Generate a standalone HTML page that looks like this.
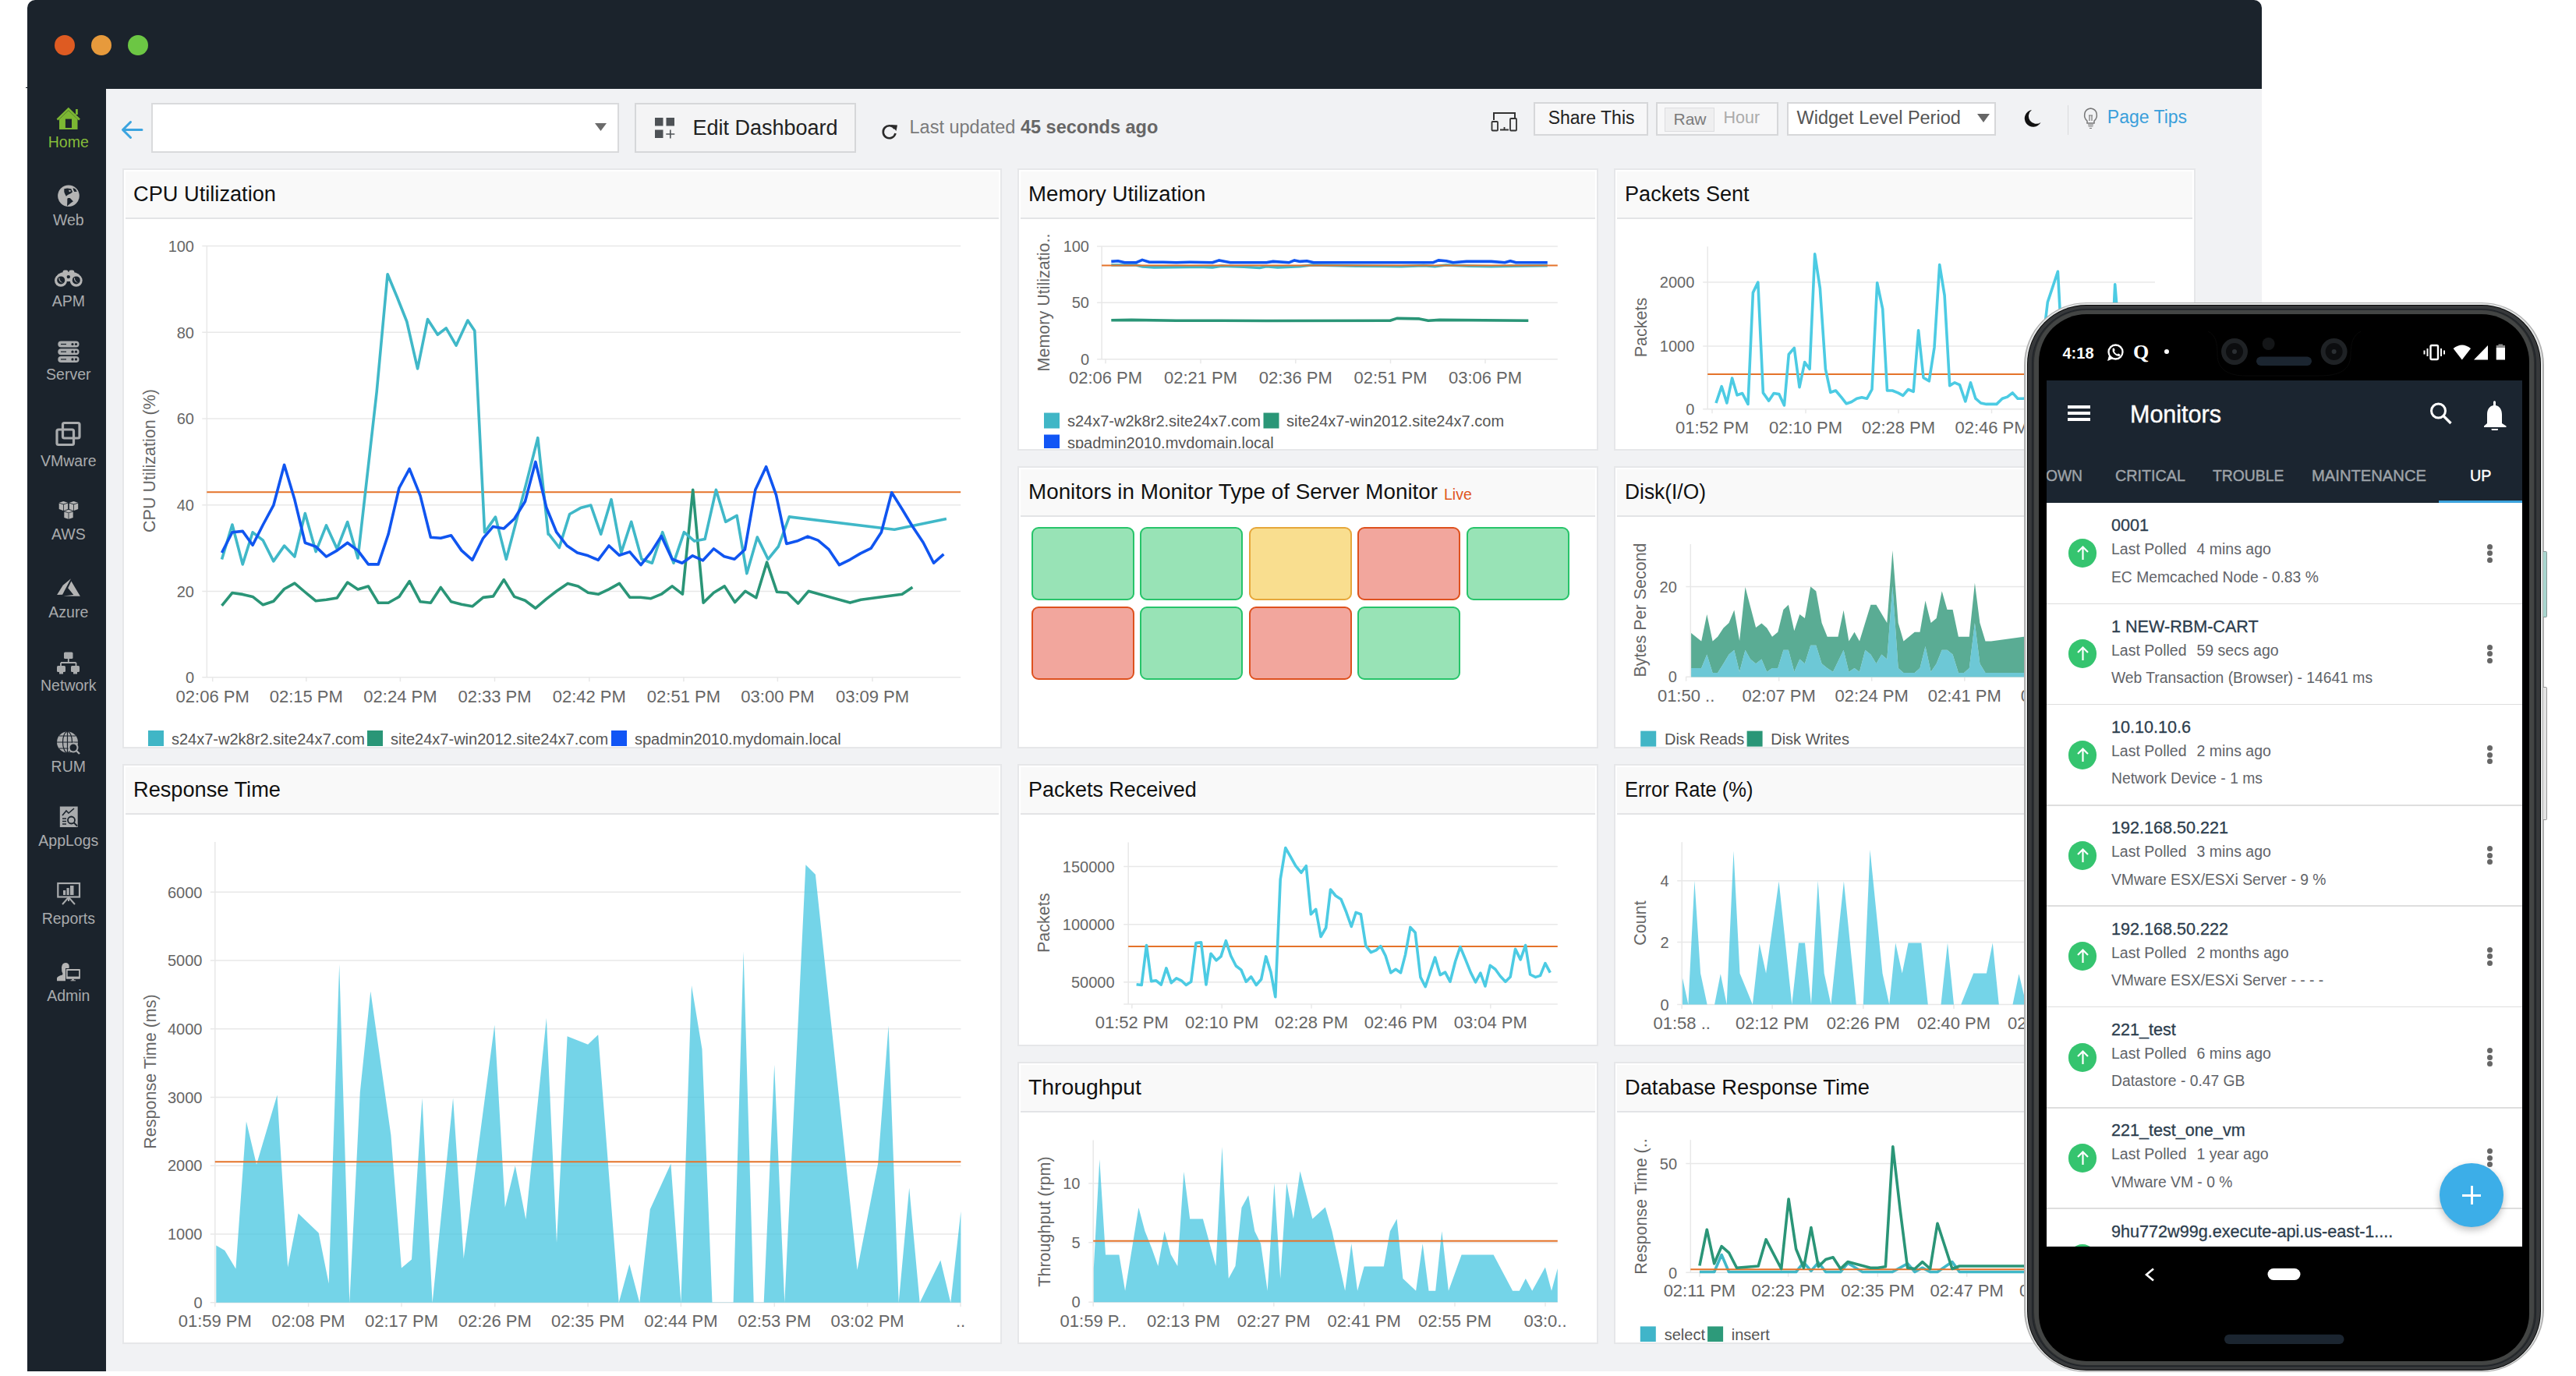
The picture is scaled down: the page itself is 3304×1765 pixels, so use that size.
<!DOCTYPE html>
<html><head><meta charset="utf-8"><title>Site24x7 Dashboard</title>
<style>
html,body{margin:0;padding:0;}
body{width:3304px;height:1765px;position:relative;overflow:hidden;background:#fff;font-family:"Liberation Sans", sans-serif;}
.w{position:absolute;background:#fff;border:2px solid #e6e7e9;box-sizing:border-box;}
.wh{position:absolute;left:2px;top:2px;right:2px;height:59px;background:#f9f9f9;border-bottom:2px solid #e3e4e6;}
</style></head><body>
<div style="position:absolute;left:35px;top:0px;width:2866px;height:1759px;background:#1b232c;border-radius:10px 10px 0 0;"></div>
<div style="position:absolute;left:70px;top:44.5px;width:26px;height:26.0px;background:#de5b22;border-radius:50%;"></div>
<div style="position:absolute;left:117px;top:44.5px;width:26px;height:26.0px;background:#e79a3c;border-radius:50%;"></div>
<div style="position:absolute;left:164px;top:44.5px;width:26px;height:26.0px;background:#6cc644;border-radius:50%;"></div>
<div style="position:absolute;left:136px;top:114px;width:2765px;height:1645px;background:#f1f2f4;"></div>
<div style="position:absolute;left:33px;top:111.5px;width:3px;height:1.2999999999999972px;background:#0f151c;"></div>
<div style="position:absolute;top:173.49px;font-size:19.5px;line-height:19.5px;color:#86bd3a;white-space:nowrap;left:87.80px;transform:translateX(-50%);">Home</div>
<div style="position:absolute;top:272.99px;font-size:19.5px;line-height:19.5px;color:#a9abad;white-space:nowrap;left:87.80px;transform:translateX(-50%);">Web</div>
<div style="position:absolute;top:377.29px;font-size:19.5px;line-height:19.5px;color:#a9abad;white-space:nowrap;left:87.80px;transform:translateX(-50%);">APM</div>
<div style="position:absolute;top:471.49px;font-size:19.5px;line-height:19.5px;color:#a9abad;white-space:nowrap;left:87.80px;transform:translateX(-50%);">Server</div>
<div style="position:absolute;top:581.69px;font-size:19.5px;line-height:19.5px;color:#a9abad;white-space:nowrap;left:87.80px;transform:translateX(-50%);">VMware</div>
<div style="position:absolute;top:676.19px;font-size:19.5px;line-height:19.5px;color:#a9abad;white-space:nowrap;left:87.80px;transform:translateX(-50%);">AWS</div>
<div style="position:absolute;top:776.19px;font-size:19.5px;line-height:19.5px;color:#a9abad;white-space:nowrap;left:87.80px;transform:translateX(-50%);">Azure</div>
<div style="position:absolute;top:869.69px;font-size:19.5px;line-height:19.5px;color:#a9abad;white-space:nowrap;left:87.80px;transform:translateX(-50%);">Network</div>
<div style="position:absolute;top:974.49px;font-size:19.5px;line-height:19.5px;color:#a9abad;white-space:nowrap;left:87.80px;transform:translateX(-50%);">RUM</div>
<div style="position:absolute;top:1068.99px;font-size:19.5px;line-height:19.5px;color:#a9abad;white-space:nowrap;left:87.80px;transform:translateX(-50%);">AppLogs</div>
<div style="position:absolute;top:1168.99px;font-size:19.5px;line-height:19.5px;color:#a9abad;white-space:nowrap;left:87.80px;transform:translateX(-50%);">Reports</div>
<div style="position:absolute;top:1267.89px;font-size:19.5px;line-height:19.5px;color:#a9abad;white-space:nowrap;left:87.80px;transform:translateX(-50%);">Admin</div>
<svg style="position:absolute;left:0;top:0" width="140" height="1300"><path d="M73.5 153.5 L87.8 139.5 L102 153.5" fill="none" stroke="#7cb733" stroke-width="2.6"/><rect x="97" y="140" width="2.8" height="7" fill="#7cb733"/><path d="M76 153 L87.8 141.8 L99.5 153 L99.5 166 L76 166 Z" fill="#7cb733"/><rect x="83.9" y="152.6" width="8.1" height="11.4" fill="#1b232c"/><circle cx="87.95" cy="251.2" r="13.8" fill="#b4b4b4"/><path d="M82.3 242.2 L86.3 241.6 L91.3 242.2 L93 246.3 L91 248 L86.9 250 L84.9 251.8 L83.4 248.9 L82.3 246.3 Z" fill="#1b232c"/><path d="M88.4 243.5 L91 244.6 L90 246.2 L88.3 245.4 Z" fill="#b4b4b4"/><path d="M93.6 241 L96.8 242.5 L98.8 245.7 L95.4 246 L94.2 243.7 Z" fill="#1b232c"/><path d="M86.9 254.1 L89.8 254.1 L93.9 258.2 L90.7 260.5 L86 264.6 L86.3 259 L86.3 255.6 Z" fill="#1b232c"/><circle cx="78" cy="359.8" r="8" fill="#b4b4b4"/><circle cx="97.7" cy="359.8" r="8" fill="#b4b4b4"/><path d="M71.5 356 Q74 350 82 349 L93.5 349 Q101.5 350 104.2 356 L104 361 L71.5 361 Z" fill="#b4b4b4"/><rect x="80.5" y="346.6" width="7" height="6" rx="2.5" fill="#b4b4b4"/><rect x="88.3" y="346.6" width="7" height="6" rx="2.5" fill="#b4b4b4"/><rect x="86.5" y="361" width="2.6" height="2.5" fill="#1b232c"/><circle cx="78.2" cy="359.4" r="5" fill="#1b232c"/><circle cx="97.8" cy="359.4" r="5" fill="#1b232c"/><circle cx="87.8" cy="355.1" r="2.2" fill="#1b232c"/><path d="M75.3 356.5 Q75.2 362.5 81.5 362.8 Q76.5 361.5 76.3 356.5 Z" fill="#b4b4b4"/><path d="M94.9 356.5 Q94.8 362.5 101.1 362.8 Q96.1 361.5 95.9 356.5 Z" fill="#b4b4b4"/><rect x="74.3" y="437.5" width="27.2" height="8" rx="4" fill="#a9abad"/><circle cx="93" cy="441.5" r="1.6" fill="#1b232c"/><circle cx="97.5" cy="441.5" r="1.6" fill="#1b232c"/><rect x="78" y="440.9" width="7" height="1.2" fill="#1b232c"/><rect x="74.3" y="447.2" width="27.2" height="8" rx="4" fill="#a9abad"/><circle cx="93" cy="451.2" r="1.6" fill="#1b232c"/><circle cx="97.5" cy="451.2" r="1.6" fill="#1b232c"/><rect x="78" y="450.59999999999997" width="7" height="1.2" fill="#1b232c"/><rect x="74.3" y="456.9" width="27.2" height="8" rx="4" fill="#a9abad"/><circle cx="93" cy="460.9" r="1.6" fill="#1b232c"/><circle cx="97.5" cy="460.9" r="1.6" fill="#1b232c"/><rect x="78" y="460.29999999999995" width="7" height="1.2" fill="#1b232c"/><rect x="80.5" y="542.5" width="21.5" height="19.5" rx="2" fill="none" stroke="#a9abad" stroke-width="3.2"/><rect x="73" y="551" width="21.5" height="19.5" rx="2" fill="none" stroke="#a9abad" stroke-width="3.2"/><path d="M75.9 644.6999999999999 L81.4 642.9 L86.9 644.6999999999999 L81.4 646.5 Z" fill="#b4b4b4"/><path d="M75.7 645.6 L81.0 647.1999999999999 L81.0 654.9 L75.7 653.1 Z" fill="#b4b4b4"/><path d="M81.80000000000001 647.1999999999999 L87.10000000000001 645.6 L87.10000000000001 653.1 L81.80000000000001 654.9 Z" fill="#b4b4b4"/><path d="M89.0 644.6999999999999 L94.5 642.9 L100.0 644.6999999999999 L94.5 646.5 Z" fill="#b4b4b4"/><path d="M88.8 645.6 L94.1 647.1999999999999 L94.1 654.9 L88.8 653.1 Z" fill="#b4b4b4"/><path d="M94.9 647.1999999999999 L100.2 645.6 L100.2 653.1 L94.9 654.9 Z" fill="#b4b4b4"/><path d="M82.5 655.5999999999999 L88 653.8 L93.5 655.5999999999999 L88 657.4 Z" fill="#b4b4b4"/><path d="M82.3 656.5 L87.6 658.0999999999999 L87.6 665.8 L82.3 664.0 Z" fill="#b4b4b4"/><path d="M88.4 658.0999999999999 L93.7 656.5 L93.7 664.0 L88.4 665.8 Z" fill="#b4b4b4"/><path d="M73.1 763 L80.7 750.7 L90.9 742.2 L80.1 762.7 Z" fill="#b4b4b4"/><path d="M91.4 745.4 L102.9 764.8 L81.4 764.5 L94.3 763 L87.2 754.3 Z" fill="#b4b4b4"/><rect x="82" y="836.4" width="11.5" height="8.5" rx="1.5" fill="#a9abad"/><path d="M87.8 845 V850 M78 850 H97.5 M78 850 V854 M97.5 850 V854" stroke="#a9abad" stroke-width="1.8" fill="none"/><rect x="73" y="854" width="11" height="8" rx="1.5" fill="#a9abad"/><rect x="91" y="854" width="11" height="8" rx="1.5" fill="#a9abad"/><rect x="76" y="862" width="5" height="2.5" fill="#a9abad"/><rect x="94" y="862" width="5" height="2.5" fill="#a9abad"/><circle cx="86.5" cy="952" r="13.5" fill="#a9abad"/><path d="M73 952 H100 M86.5 938.5 V965.5 M76 944 H97 M76 960 H97" stroke="#1b232c" stroke-width="1.2" fill="none"/><ellipse cx="86.5" cy="952" rx="6" ry="13.5" fill="none" stroke="#1b232c" stroke-width="1.2"/><circle cx="94" cy="959" r="5.5" fill="#1b232c" stroke="#a9abad" stroke-width="2"/><path d="M97.5 962.5 L102 967" stroke="#a9abad" stroke-width="2.4"/><path d="M76.8 1034.5 H99.7 V1061 H76.8 Z" fill="#a9abad"/><path d="M80 1046 L85 1040 L88 1043 L95 1037" stroke="#1b232c" stroke-width="1.6" fill="none"/><path d="M80 1050 H85 M80 1053.5 H85 M80 1057 H85" stroke="#1b232c" stroke-width="1.3"/><circle cx="91.5" cy="1052" r="4.5" fill="none" stroke="#1b232c" stroke-width="1.8"/><path d="M94.5 1055 L99 1059.5" stroke="#1b232c" stroke-width="2"/><rect x="74.3" y="1133" width="27.7" height="17.5" fill="none" stroke="#a9abad" stroke-width="2.2"/><rect x="81" y="1142" width="3.2" height="6" fill="#a9abad"/><rect x="85.5" y="1139" width="3.2" height="9" fill="#a9abad"/><rect x="90" y="1136" width="4.5" height="12" fill="#a9abad"/><path d="M88 1151 L80 1160 M88 1151 L96 1160 M88 1151 V1156" stroke="#a9abad" stroke-width="2"/><path d="M73 1258.2 L73 1254.5 Q74 1252 80 1250.5 L80.5 1249 Q78.8 1246 79 1241 Q79.5 1235 84 1235 Q88.5 1235.2 88.8 1239.5 L88.5 1242 L84 1242 L84 1258.2 Z" fill="#b4b4b4"/><rect x="84.8" y="1242.9" width="18.1" height="12.8" rx="0.8" fill="#b4b4b4"/><rect x="86.7" y="1245" width="14.4" height="7.6" fill="#1b232c"/><rect x="92.2" y="1255.7" width="2.6" height="1.8" fill="#b4b4b4"/><rect x="90.6" y="1257.3" width="6.3" height="1" fill="#b4b4b4"/></svg>
<svg style="position:absolute;left:150px;top:150px" width="40" height="34"><path d="M8 16.5 H32 M17.5 6.5 L7.5 16.5 L17.5 26.5" fill="none" stroke="#3ba4df" stroke-width="3" stroke-linecap="round" stroke-linejoin="round"/></svg>
<div style="position:absolute;left:194px;top:132px;width:600px;height:64px;background:#fff;border:2px solid #d9dadc;box-sizing:border-box;"></div>
<svg style="position:absolute;left:760px;top:155px" width="22" height="16"><path d="M3 3 H18 L10.5 13 Z" fill="#6b6b6b"/></svg>
<div style="position:absolute;left:814px;top:132px;width:284px;height:64px;background:#f4f4f5;border:2px solid #d6d7d9;box-sizing:border-box;"></div>
<svg style="position:absolute;left:838px;top:150px" width="32" height="30"><rect x="2" y="1" width="10.5" height="10.5" fill="#4e5256"/><rect x="16.5" y="1" width="10.5" height="10.5" fill="#4e5256"/><rect x="2" y="16.5" width="10.5" height="10.5" fill="#4e5256"/><path d="M21.8 16.5 V27.5 M16.3 22 H27.3" stroke="#4e5256" stroke-width="1.6"/></svg>
<div style="position:absolute;top:150.84px;font-size:27px;line-height:27px;color:#222;white-space:nowrap;left:888.50px;">Edit Dashboard</div>
<svg style="position:absolute;left:1128px;top:155px" width="28" height="26"><path d="M19.5 10 A8 8 0 1 0 20.5 16" fill="none" stroke="#2b2b2b" stroke-width="2.6"/><path d="M14.5 5 L23 5.5 L21.5 13 Z" fill="#2b2b2b"/></svg>
<div style="position:absolute;top:152.10px;font-size:23.5px;line-height:23.5px;color:#7a7a7a;white-space:nowrap;left:1166.50px;">Last updated <b style="color:#666">45 seconds ago</b></div>
<svg style="position:absolute;left:1910px;top:140px" width="40" height="32"><path d="M6 14 V5 H33 V13" fill="none" stroke="#333" stroke-width="2"/><rect x="3.5" y="16" width="7.5" height="11.5" rx="1" fill="#f1f2f4" stroke="#333" stroke-width="1.8"/><rect x="27" y="12" width="8" height="15.5" rx="1" fill="#f1f2f4" stroke="#333" stroke-width="1.8"/><path d="M14 26.5 H25 M19.5 23 V26.5" stroke="#333" stroke-width="1.8"/></svg>
<div style="position:absolute;left:1967px;top:131px;width:147px;height:43px;background:#f7f7f8;border:2px solid #d6d7d9;box-sizing:border-box;"></div>
<div style="position:absolute;top:140.03px;font-size:23px;line-height:23px;color:#222;white-space:nowrap;left:1985.70px;">Share This</div>
<div style="position:absolute;left:2124px;top:131px;width:157px;height:43px;background:#f7f7f8;border:2px solid #d6d7d9;box-sizing:border-box;"></div>
<div style="position:absolute;left:2134.5px;top:137.5px;width:64.5px;height:31.5px;background:#efeff0;border:1.5px solid #dcdddf;box-sizing:border-box;"></div>
<div style="position:absolute;top:141.72px;font-size:21px;line-height:21px;color:#7b7b7b;white-space:nowrap;left:2146.50px;">Raw</div>
<div style="position:absolute;top:141.30px;font-size:21.5px;line-height:21.5px;color:#ababab;white-space:nowrap;left:2210.60px;">Hour</div>
<div style="position:absolute;left:2292px;top:131px;width:268px;height:43px;background:#fff;border:2px solid #d6d7d9;box-sizing:border-box;"></div>
<div style="position:absolute;top:140.10px;font-size:23.5px;line-height:23.5px;color:#555;white-space:nowrap;left:2304.50px;">Widget Level Period</div>
<svg style="position:absolute;left:2533px;top:143px" width="22" height="16"><path d="M3 3 H19 L11 14 Z" fill="#666"/></svg>
<svg style="position:absolute;left:2590px;top:137px" width="32" height="30"><path d="M16 4 A11 11 0 1 0 27.5 20 A9 9 0 0 1 16 4 Z" fill="#111"/></svg>
<div style="position:absolute;left:2651.5px;top:134.5px;width:1.5px;height:38.5px;background:#d9dadc;"></div>
<svg style="position:absolute;left:2668px;top:134px" width="28" height="34"><path d="M9 21 C4 17 4 6 13.5 5 C23 6 23 17 18 21 V24 H9 Z" fill="none" stroke="#777" stroke-width="1.5"/><path d="M10 26 H17 M10.5 28 H16.5 M12 30.5 H15 M12 21 V14 M15 21 V14 M11 14 H16" stroke="#777" stroke-width="1.2" fill="none"/></svg>
<div style="position:absolute;top:138.83px;font-size:23px;line-height:23px;color:#3a9fdb;white-space:nowrap;left:2702.80px;">Page Tips</div>
<div class="w" style="left:157px;top:216px;width:1128px;height:744px;"><div class="wh"></div></div>
<div style="position:absolute;top:236.34px;font-size:27px;line-height:27px;color:#111;white-space:nowrap;transform:scaleX(1.0080);transform-origin:0 0;left:171.00px;">CPU Utilization</div>
<div class="w" style="left:1305px;top:216px;width:745px;height:362px;"><div class="wh"></div></div>
<div style="position:absolute;top:236.34px;font-size:27px;line-height:27px;color:#111;white-space:nowrap;transform:scaleX(1.0236);transform-origin:0 0;left:1319.00px;">Memory Utilization</div>
<div class="w" style="left:2070px;top:216px;width:746px;height:362px;"><div class="wh"></div></div>
<div style="position:absolute;top:236.34px;font-size:27px;line-height:27px;color:#111;white-space:nowrap;transform:scaleX(1.0035);transform-origin:0 0;left:2084.00px;">Packets Sent</div>
<div class="w" style="left:1305px;top:598px;width:745px;height:362px;"><div class="wh"></div></div>
<div style="position:absolute;top:618.34px;font-size:27px;line-height:27px;color:#111;white-space:nowrap;transform:scaleX(1.0301);transform-origin:0 0;left:1319.00px;">Monitors in Monitor Type of Server Monitor</div>
<div class="w" style="left:2070px;top:598px;width:746px;height:362px;"><div class="wh"></div></div>
<div style="position:absolute;top:618.34px;font-size:27px;line-height:27px;color:#111;white-space:nowrap;transform:scaleX(0.9763);transform-origin:0 0;left:2084.00px;">Disk(I/O)</div>
<div class="w" style="left:157px;top:980px;width:1128px;height:744px;"><div class="wh"></div></div>
<div style="position:absolute;top:1000.34px;font-size:27px;line-height:27px;color:#111;white-space:nowrap;transform:scaleX(1.0071);transform-origin:0 0;left:171.00px;">Response Time</div>
<div class="w" style="left:1305px;top:980px;width:745px;height:362px;"><div class="wh"></div></div>
<div style="position:absolute;top:1000.34px;font-size:27px;line-height:27px;color:#111;white-space:nowrap;transform:scaleX(0.9981);transform-origin:0 0;left:1319.00px;">Packets Received</div>
<div class="w" style="left:1305px;top:1362px;width:745px;height:362px;"><div class="wh"></div></div>
<div style="position:absolute;top:1382.34px;font-size:27px;line-height:27px;color:#111;white-space:nowrap;transform:scaleX(1.0488);transform-origin:0 0;left:1319.00px;">Throughput</div>
<div class="w" style="left:2070px;top:980px;width:746px;height:362px;"><div class="wh"></div></div>
<div style="position:absolute;top:1000.34px;font-size:27px;line-height:27px;color:#111;white-space:nowrap;transform:scaleX(0.9452);transform-origin:0 0;left:2084.00px;">Error Rate (%)</div>
<div class="w" style="left:2070px;top:1362px;width:746px;height:362px;"><div class="wh"></div></div>
<div style="position:absolute;top:1382.34px;font-size:27px;line-height:27px;color:#111;white-space:nowrap;transform:scaleX(1.0102);transform-origin:0 0;left:2084.00px;">Database Response Time</div>
<div style="position:absolute;top:625.29px;font-size:19.5px;line-height:19.5px;color:#e0561c;white-space:nowrap;left:1852.00px;">Live</div>
<div style="position:absolute;left:1323px;top:676px;width:131.5px;height:94px;background:#98e3b6;border:2px solid #27c46a;border-radius:9px;box-sizing:border-box;"></div>
<div style="position:absolute;left:1462px;top:676px;width:131.5px;height:94px;background:#98e3b6;border:2px solid #27c46a;border-radius:9px;box-sizing:border-box;"></div>
<div style="position:absolute;left:1602px;top:676px;width:131.5px;height:94px;background:#f9de8f;border:2px solid #e6a73a;border-radius:9px;box-sizing:border-box;"></div>
<div style="position:absolute;left:1741px;top:676px;width:131.5px;height:94px;background:#f2a69d;border:2px solid #de511e;border-radius:9px;box-sizing:border-box;"></div>
<div style="position:absolute;left:1881px;top:676px;width:131.5px;height:94px;background:#98e3b6;border:2px solid #27c46a;border-radius:9px;box-sizing:border-box;"></div>
<div style="position:absolute;left:1323px;top:778px;width:131.5px;height:94px;background:#f2a69d;border:2px solid #de511e;border-radius:9px;box-sizing:border-box;"></div>
<div style="position:absolute;left:1462px;top:778px;width:131.5px;height:94px;background:#98e3b6;border:2px solid #27c46a;border-radius:9px;box-sizing:border-box;"></div>
<div style="position:absolute;left:1602px;top:778px;width:131.5px;height:94px;background:#f2a69d;border:2px solid #de511e;border-radius:9px;box-sizing:border-box;"></div>
<div style="position:absolute;left:1741px;top:778px;width:131.5px;height:94px;background:#98e3b6;border:2px solid #27c46a;border-radius:9px;box-sizing:border-box;"></div>
<svg style="position:absolute;left:0;top:0" width="3304" height="1765" font-family="Liberation Sans, sans-serif"><line x1="259.3" y1="315.6" x2="1232.2" y2="315.6" stroke="#e8e8e8" stroke-width="1.5"/><line x1="259.3" y1="426.3" x2="1232.2" y2="426.3" stroke="#e8e8e8" stroke-width="1.5"/><line x1="259.3" y1="537.0" x2="1232.2" y2="537.0" stroke="#e8e8e8" stroke-width="1.5"/><line x1="259.3" y1="647.8" x2="1232.2" y2="647.8" stroke="#e8e8e8" stroke-width="1.5"/><line x1="259.3" y1="758.4" x2="1232.2" y2="758.4" stroke="#e8e8e8" stroke-width="1.5"/><line x1="259.3" y1="868.8" x2="1232.2" y2="868.8" stroke="#e8e8e8" stroke-width="1.5"/><line x1="265.3" y1="315" x2="265.3" y2="868.8" stroke="#e8e8e8" stroke-width="1.5"/><line x1="272.7" y1="868.8" x2="272.7" y2="874.3" stroke="#e8e8e8" stroke-width="1.5"/><line x1="392.8" y1="868.8" x2="392.8" y2="874.3" stroke="#e8e8e8" stroke-width="1.5"/><line x1="513.4" y1="868.8" x2="513.4" y2="874.3" stroke="#e8e8e8" stroke-width="1.5"/><line x1="634.5" y1="868.8" x2="634.5" y2="874.3" stroke="#e8e8e8" stroke-width="1.5"/><line x1="755.8" y1="868.8" x2="755.8" y2="874.3" stroke="#e8e8e8" stroke-width="1.5"/><line x1="876.9" y1="868.8" x2="876.9" y2="874.3" stroke="#e8e8e8" stroke-width="1.5"/><line x1="997.4" y1="868.8" x2="997.4" y2="874.3" stroke="#e8e8e8" stroke-width="1.5"/><line x1="1119.0" y1="868.8" x2="1119.0" y2="874.3" stroke="#e8e8e8" stroke-width="1.5"/><text x="249.0" y="322.8" font-size="20" fill="#666666" text-anchor="end">100</text><text x="249.0" y="433.5" font-size="20" fill="#666666" text-anchor="end">80</text><text x="249.0" y="544.2" font-size="20" fill="#666666" text-anchor="end">60</text><text x="249.0" y="655.0" font-size="20" fill="#666666" text-anchor="end">40</text><text x="249.0" y="765.6" font-size="20" fill="#666666" text-anchor="end">20</text><text x="249.0" y="876.0" font-size="20" fill="#666666" text-anchor="end">0</text><text x="272.7" y="900.5" font-size="22" fill="#666666" text-anchor="middle">02:06 PM</text><text x="392.8" y="900.5" font-size="22" fill="#666666" text-anchor="middle">02:15 PM</text><text x="513.4" y="900.5" font-size="22" fill="#666666" text-anchor="middle">02:24 PM</text><text x="634.5" y="900.5" font-size="22" fill="#666666" text-anchor="middle">02:33 PM</text><text x="755.8" y="900.5" font-size="22" fill="#666666" text-anchor="middle">02:42 PM</text><text x="876.9" y="900.5" font-size="22" fill="#666666" text-anchor="middle">02:51 PM</text><text x="997.4" y="900.5" font-size="22" fill="#666666" text-anchor="middle">03:00 PM</text><text x="1119.0" y="900.5" font-size="22" fill="#666666" text-anchor="middle">03:09 PM</text><text x="0" y="0" font-size="21.5" fill="#666666" text-anchor="middle" transform="translate(199,591) rotate(-90)">CPU Utilization (%)</text><line x1="265.3" y1="631.2" x2="1232.2" y2="631.2" stroke="#e4732a" stroke-width="2"/><polyline points="284.5,776.8 297.9,760.5 311.2,762.4 324.1,765.4 337.4,775.8 350.8,771.3 364.6,755.5 377.9,748.1 391.3,759.5 405.1,770.8 418.5,769.3 432.3,766.9 445.7,747.1 459.0,756.0 472.4,752.0 485.2,773.3 498.1,773.3 511.9,765.4 525.2,745.6 539.1,771.8 552.4,773.3 565.3,753.5 578.6,771.8 592.0,775.3 605.8,777.8 619.7,766.4 632.5,764.9 646.3,743.6 659.7,765.4 673.5,770.3 686.9,780.2 700.7,768.4 713.8,758.3 728.2,748.4 741.5,751.9 754.4,760.3 767.7,762.2 781.0,755.8 794.4,748.4 807.7,766.2 821.5,766.2 834.9,767.7 848.2,762.2 862.1,751.9 875.4,762.2 888.7,628.3 902.1,773.1 915.4,760.3 929.3,751.9 942.6,772.6 955.9,758.3 969.8,766.7 983.6,721.2 996.5,759.3 1009.8,760.3 1023.6,774.1 1037.0,758.3 1090.3,773.1 1104.2,769.2 1157.0,762.2 1170.4,753.3" fill="none" stroke="#2a9577" stroke-width="3.6" stroke-linejoin="round" stroke-linecap="butt"/><polyline points="284.5,717.4 297.9,673.0 311.2,723.9 324.1,682.8 337.4,693.2 350.8,719.9 364.6,700.1 377.9,714.0 391.3,658.6 405.1,707.6 418.5,673.9 432.3,704.1 445.7,669.5 459.0,716.0 483.2,502.4 497.1,351.7 509.4,381.3 521.8,412.5 535.6,472.8 548.5,409.5 561.3,429.3 572.2,420.9 585.1,443.1 599.9,411.0 608.8,424.3 621.6,682.8 635.5,663.1 649.3,717.4 676.0,616.1 689.8,561.7 703.2,685.3 704.0,685.2 717.3,702.5 730.6,659.5 744.5,651.6 757.8,648.1 770.7,685.2 784.0,640.7 796.8,708.9 809.7,669.3 823.0,717.3 836.4,722.2 849.7,682.7 864.0,722.2 877.4,682.7 890.7,694.1 904.1,691.6 918.4,628.3 930.7,669.3 945.1,661.4 957.9,735.6 971.3,689.1 985.1,717.3 998.4,701.0 1012.3,662.9 1147.2,679.2 1213.9,665.4" fill="none" stroke="#40b8c8" stroke-width="3.6" stroke-linejoin="round" stroke-linecap="butt"/><polyline points="284.5,709.0 297.9,682.8 311.2,681.4 324.1,699.2 337.4,673.0 350.8,648.2 364.6,596.3 377.9,640.8 391.3,696.2 405.1,701.1 418.5,714.0 432.3,706.1 445.7,696.2 459.0,706.1 472.4,723.9 485.2,723.9 498.1,685.3 511.9,626.0 525.2,601.3 539.1,635.9 552.4,689.3 565.3,690.3 578.6,686.8 592.0,706.1 605.8,718.4 619.7,690.3 632.5,675.4 646.3,677.9 659.7,665.5 673.5,643.3 686.9,592.4 700.7,650.7 713.8,682.7 727.2,700.0 740.5,708.9 754.4,712.8 767.2,718.3 781.0,700.0 794.4,712.3 807.7,707.9 822.0,724.7 835.4,707.9 848.2,687.6 862.1,717.3 874.9,722.2 888.3,712.8 901.6,718.8 915.4,703.9 928.8,713.8 942.1,717.3 955.4,704.9 968.8,628.3 982.6,598.7 995.5,634.8 1008.8,697.5 1022.2,694.1 1036.0,688.1 1049.3,693.1 1063.2,704.9 1076.5,724.7 1090.3,717.8 1103.7,709.9 1117.0,703.4 1130.4,682.7 1143.7,631.8 1157.0,653.0 1170.4,675.3 1184.2,696.0 1197.6,722.2 1210.4,710.9" fill="none" stroke="#1055f0" stroke-width="3.6" stroke-linejoin="round" stroke-linecap="butt"/><rect x="190" y="937" width="20" height="20" fill="#40b6c6"/><text x="220.0" y="954.5" font-size="20" fill="#555" text-anchor="start">s24x7-w2k8r2.site24x7.com</text><rect x="471" y="937" width="20" height="20" fill="#2a9677"/><text x="501.0" y="954.5" font-size="20" fill="#555" text-anchor="start">site24x7-win2012.site24x7.com</text><rect x="784" y="937" width="20" height="20" fill="#1155f5"/><text x="814.0" y="954.5" font-size="20" fill="#555" text-anchor="start">spadmin2010.mydomain.local</text><line x1="1407.1" y1="316" x2="1997.8" y2="316" stroke="#e8e8e8" stroke-width="1.5"/><line x1="1407.1" y1="388.2" x2="1997.8" y2="388.2" stroke="#e8e8e8" stroke-width="1.5"/><line x1="1407.1" y1="460.8" x2="1997.8" y2="460.8" stroke="#e8e8e8" stroke-width="1.5"/><line x1="1413.1" y1="316" x2="1413.1" y2="460.8" stroke="#e8e8e8" stroke-width="1.5"/><line x1="1418" y1="460.8" x2="1418" y2="466.3" stroke="#e8e8e8" stroke-width="1.5"/><line x1="1540" y1="460.8" x2="1540" y2="466.3" stroke="#e8e8e8" stroke-width="1.5"/><line x1="1661.8" y1="460.8" x2="1661.8" y2="466.3" stroke="#e8e8e8" stroke-width="1.5"/><line x1="1783.5" y1="460.8" x2="1783.5" y2="466.3" stroke="#e8e8e8" stroke-width="1.5"/><line x1="1905" y1="460.8" x2="1905" y2="466.3" stroke="#e8e8e8" stroke-width="1.5"/><text x="1397.0" y="323.2" font-size="20" fill="#666666" text-anchor="end">100</text><text x="1397.0" y="395.4" font-size="20" fill="#666666" text-anchor="end">50</text><text x="1397.0" y="468.0" font-size="20" fill="#666666" text-anchor="end">0</text><text x="1418.0" y="492.0" font-size="22" fill="#666666" text-anchor="middle">02:06 PM</text><text x="1540.0" y="492.0" font-size="22" fill="#666666" text-anchor="middle">02:21 PM</text><text x="1661.8" y="492.0" font-size="22" fill="#666666" text-anchor="middle">02:36 PM</text><text x="1783.5" y="492.0" font-size="22" fill="#666666" text-anchor="middle">02:51 PM</text><text x="1905.0" y="492.0" font-size="22" fill="#666666" text-anchor="middle">03:06 PM</text><text x="0" y="0" font-size="21.5" fill="#666666" text-anchor="middle" transform="translate(1346,388) rotate(-90)">Memory Utilizatio..</text><polyline points="1425.3,340.0 1457.0,340.0 1465.6,342.0 1480.1,342.9 1537.7,342.3 1555.1,342.9 1566.6,341.1 1595.4,342.3 1615.6,343.5 1624.3,341.7 1638.7,342.9 1667.5,341.7 1682.0,340.0 1739.7,341.1 1797.3,341.7 1826.2,340.6 1840.6,341.7 1855.0,340.0 1883.9,341.1 1912.7,341.7 1941.6,341.1 1984.8,340.6" fill="none" stroke="#40b8c8" stroke-width="3.6" stroke-linejoin="round" stroke-linecap="butt"/><line x1="1413.1" y1="340.6" x2="1997.8" y2="340.6" stroke="#e4732a" stroke-width="2"/><polyline points="1425.3,335.4 1433.9,334.8 1442.6,336.8 1457.0,336.8 1465.1,333.4 1474.3,336.2 1491.6,336.2 1508.9,336.8 1526.2,336.2 1555.1,336.8 1563.7,333.9 1578.1,336.8 1624.3,336.8 1632.9,335.4 1653.1,336.8 1660.3,333.9 1667.5,335.4 1676.2,334.8 1684.8,336.8 1837.7,336.8 1844.9,333.9 1855.0,334.8 1863.7,336.8 1881.0,335.4 1912.7,335.4 1930.0,336.8 1937.2,334.8 1944.4,336.8 1984.8,336.8" fill="none" stroke="#1055f0" stroke-width="3.6" stroke-linejoin="round" stroke-linecap="butt"/><polyline points="1425.3,410.7 1451.2,410.4 1508.9,411.2 1566.6,411.2 1624.3,411.5 1782.9,411.2 1791.6,408.4 1820.4,408.9 1831.9,411.2 1846.4,410.4 1960.3,411.2" fill="none" stroke="#2a9577" stroke-width="3.6" stroke-linejoin="round" stroke-linecap="butt"/><clipPath id="cm"><rect x="1300" y="500" width="760" height="75"/></clipPath><g clip-path="url(#cm)"><rect x="1339" y="529.5" width="20" height="20" fill="#40b6c6"/><text x="1369.0" y="547.0" font-size="20" fill="#555" text-anchor="start">s24x7-w2k8r2.site24x7.com</text><rect x="1620.5" y="529.5" width="20" height="20" fill="#2a9677"/><text x="1650.0" y="547.0" font-size="20" fill="#555" text-anchor="start">site24x7-win2012.site24x7.com</text><rect x="1339" y="557.5" width="20" height="20" fill="#1155f5"/><text x="1369.0" y="575.0" font-size="20" fill="#555" text-anchor="start">spadmin2010.mydomain.local</text></g><line x1="2184.2" y1="362" x2="2764" y2="362" stroke="#e8e8e8" stroke-width="1.5"/><line x1="2184.2" y1="444" x2="2764" y2="444" stroke="#e8e8e8" stroke-width="1.5"/><line x1="2184.2" y1="524.8" x2="2764" y2="524.8" stroke="#e8e8e8" stroke-width="1.5"/><line x1="2190.2" y1="316.3" x2="2190.2" y2="524.8" stroke="#e8e8e8" stroke-width="1.5"/><line x1="2196" y1="524.8" x2="2196" y2="530.3" stroke="#e8e8e8" stroke-width="1.5"/><line x1="2316" y1="524.8" x2="2316" y2="530.3" stroke="#e8e8e8" stroke-width="1.5"/><line x1="2435" y1="524.8" x2="2435" y2="530.3" stroke="#e8e8e8" stroke-width="1.5"/><line x1="2554.5" y1="524.8" x2="2554.5" y2="530.3" stroke="#e8e8e8" stroke-width="1.5"/><line x1="2674" y1="524.8" x2="2674" y2="530.3" stroke="#e8e8e8" stroke-width="1.5"/><text x="2173.3" y="369.2" font-size="20" fill="#666666" text-anchor="end">2000</text><text x="2173.3" y="451.2" font-size="20" fill="#666666" text-anchor="end">1000</text><text x="2173.3" y="532.0" font-size="20" fill="#666666" text-anchor="end">0</text><text x="2196.0" y="555.6" font-size="22" fill="#666666" text-anchor="middle">01:52 PM</text><text x="2316.0" y="555.6" font-size="22" fill="#666666" text-anchor="middle">02:10 PM</text><text x="2435.0" y="555.6" font-size="22" fill="#666666" text-anchor="middle">02:28 PM</text><text x="2554.5" y="555.6" font-size="22" fill="#666666" text-anchor="middle">02:46 PM</text><text x="2674.0" y="555.6" font-size="22" fill="#666666" text-anchor="middle">03:04 PM</text><text x="0" y="0" font-size="21.5" fill="#666666" text-anchor="middle" transform="translate(2112,420) rotate(-90)">Packets</text><line x1="2190.2" y1="480" x2="2764" y2="480" stroke="#e4732a" stroke-width="2"/><polyline points="2201.0,517.0 2208.2,495.7 2214.9,517.0 2221.6,485.0 2228.0,506.8 2234.7,504.5 2242.0,518.4 2248.4,375.4 2254.8,362.0 2261.4,503.9 2268.7,514.1 2275.1,504.5 2281.8,505.6 2288.5,519.9 2294.3,454.5 2301.3,446.3 2308.0,496.6 2314.7,464.6 2321.1,473.4 2327.7,325.9 2334.4,370.1 2341.4,473.4 2347.8,503.3 2354.5,501.0 2361.8,509.7 2368.2,517.8 2374.8,515.5 2381.5,511.2 2387.9,509.7 2394.6,511.2 2401.0,499.5 2407.7,362.9 2414.7,396.3 2420.5,501.0 2427.2,501.0 2434.4,503.9 2440.8,507.4 2447.5,499.5 2454.2,502.4 2460.6,423.9 2467.0,484.4 2474.3,488.8 2481.0,445.7 2487.7,339.6 2494.1,378.9 2500.7,494.6 2507.1,490.8 2513.5,493.7 2520.8,514.9 2527.5,490.8 2533.9,511.2 2540.6,517.0 2547.8,518.4 2554.5,518.4 2560.9,518.4 2568.2,511.2 2574.6,509.1 2581.3,503.9 2588.0,511.2 2594.4,511.2 2611.8,509.7 2626.3,387.6 2639.4,348.3 2646.7,483.5 2652.5,509.7 2681.6,509.7 2707.2,483.5 2712.7,364.9 2722.3,483.5 2739.7,509.7 2763.9,506.8" fill="none" stroke="#4ccbe3" stroke-width="3.6" stroke-linejoin="round" stroke-linecap="butt"/><line x1="2162.3" y1="752.6" x2="2764" y2="752.6" stroke="#e8e8e8" stroke-width="1.5"/><line x1="2162.3" y1="868.2" x2="2764" y2="868.2" stroke="#e8e8e8" stroke-width="1.5"/><line x1="2168.3" y1="698" x2="2168.3" y2="868.2" stroke="#e8e8e8" stroke-width="1.5"/><line x1="2162.6" y1="868.2" x2="2162.6" y2="873.7" stroke="#e8e8e8" stroke-width="1.5"/><line x1="2281.7" y1="868.2" x2="2281.7" y2="873.7" stroke="#e8e8e8" stroke-width="1.5"/><line x1="2400.7" y1="868.2" x2="2400.7" y2="873.7" stroke="#e8e8e8" stroke-width="1.5"/><line x1="2519.8" y1="868.2" x2="2519.8" y2="873.7" stroke="#e8e8e8" stroke-width="1.5"/><line x1="2638.9" y1="868.2" x2="2638.9" y2="873.7" stroke="#e8e8e8" stroke-width="1.5"/><text x="2150.8" y="759.8" font-size="20" fill="#666666" text-anchor="end">20</text><text x="2150.8" y="875.4" font-size="20" fill="#666666" text-anchor="end">0</text><text x="2162.6" y="899.6" font-size="22" fill="#666666" text-anchor="middle">01:50 ..</text><text x="2281.7" y="899.6" font-size="22" fill="#666666" text-anchor="middle">02:07 PM</text><text x="2400.7" y="899.6" font-size="22" fill="#666666" text-anchor="middle">02:24 PM</text><text x="2519.8" y="899.6" font-size="22" fill="#666666" text-anchor="middle">02:41 PM</text><text x="2638.9" y="899.6" font-size="22" fill="#666666" text-anchor="middle">02:58 PM</text><text x="0" y="0" font-size="21.5" fill="#666666" text-anchor="middle" transform="translate(2111,782.5) rotate(-90)">Bytes Per Second</text><polygon points="2169.1,868.2 2169.1,812.0 2182.2,822.4 2189.3,787.9 2196.6,822.4 2203.1,816.7 2210.5,805.4 2217.5,798.9 2224.3,782.4 2231.1,821.9 2238.5,753.1 2245.0,777.9 2252.1,804.9 2259.4,799.4 2266.2,805.4 2273.0,816.7 2280.3,810.7 2287.4,781.9 2293.9,775.8 2301.3,809.3 2308.3,787.9 2314.9,793.1 2322.2,752.6 2329.3,758.3 2336.6,798.9 2343.7,816.7 2357.5,816.7 2364.6,782.7 2371.4,822.4 2378.5,810.7 2385.0,822.4 2399.4,775.8 2406.5,775.8 2420.3,798.9 2427.4,706.0 2434.7,798.9 2441.5,822.4 2455.7,810.7 2462.5,810.7 2469.5,770.6 2476.6,798.9 2483.7,793.1 2490.7,758.3 2497.5,781.9 2504.6,781.9 2511.9,816.7 2525.8,816.7 2532.9,747.8 2539.4,798.9 2546.5,822.4 2553.8,822.4 2595.7,816.7 2646.7,816.7 2646.7,868.2" fill="#239070" fill-opacity="0.75"/><polygon points="2169.1,868.2 2169.1,857.0 2182.2,857.0 2189.3,839.4 2196.6,863.0 2203.1,863.0 2210.5,851.2 2217.5,839.4 2224.3,833.7 2231.1,861.7 2238.5,833.7 2245.0,845.5 2252.1,851.2 2259.4,845.5 2266.2,861.7 2273.0,857.0 2280.3,857.0 2287.4,833.7 2293.9,833.7 2301.3,861.7 2308.3,845.5 2314.9,851.2 2322.2,827.7 2329.3,827.7 2336.6,851.2 2343.7,857.0 2351.0,861.7 2364.6,833.7 2371.4,861.7 2378.5,857.0 2385.0,861.7 2392.3,833.7 2399.4,839.4 2406.5,851.2 2413.3,839.4 2420.3,845.5 2427.4,751.8 2434.7,857.0 2441.5,863.0 2455.7,863.0 2462.5,857.0 2469.5,829.0 2476.6,861.7 2483.7,851.2 2490.7,833.7 2497.5,833.7 2504.6,839.4 2511.9,863.0 2519.0,863.0 2525.8,857.0 2532.9,798.9 2539.4,851.2 2546.5,863.0 2595.7,863.0 2646.7,863.0 2646.7,868.2" fill="#fff"/><polygon points="2169.1,868.2 2169.1,857.0 2182.2,857.0 2189.3,839.4 2196.6,863.0 2203.1,863.0 2210.5,851.2 2217.5,839.4 2224.3,833.7 2231.1,861.7 2238.5,833.7 2245.0,845.5 2252.1,851.2 2259.4,845.5 2266.2,861.7 2273.0,857.0 2280.3,857.0 2287.4,833.7 2293.9,833.7 2301.3,861.7 2308.3,845.5 2314.9,851.2 2322.2,827.7 2329.3,827.7 2336.6,851.2 2343.7,857.0 2351.0,861.7 2364.6,833.7 2371.4,861.7 2378.5,857.0 2385.0,861.7 2392.3,833.7 2399.4,839.4 2406.5,851.2 2413.3,839.4 2420.3,845.5 2427.4,751.8 2434.7,857.0 2441.5,863.0 2455.7,863.0 2462.5,857.0 2469.5,829.0 2476.6,861.7 2483.7,851.2 2490.7,833.7 2497.5,833.7 2504.6,839.4 2511.9,863.0 2519.0,863.0 2525.8,857.0 2532.9,798.9 2539.4,851.2 2546.5,863.0 2595.7,863.0 2646.7,863.0 2646.7,868.2" fill="#3cb5c8" fill-opacity="0.75"/><rect x="2104.2" y="937.6" width="20" height="20" fill="#42b6c6"/><text x="2135.0" y="955.1" font-size="20" fill="#555" text-anchor="start">Disk Reads</text><rect x="2240.6" y="937.6" width="20" height="20" fill="#2a9677"/><text x="2271.2" y="955.1" font-size="20" fill="#555" text-anchor="start">Disk Writes</text><line x1="269.8" y1="1144.3" x2="1232.4" y2="1144.3" stroke="#e8e8e8" stroke-width="1.5"/><line x1="269.8" y1="1232" x2="1232.4" y2="1232" stroke="#e8e8e8" stroke-width="1.5"/><line x1="269.8" y1="1319.7" x2="1232.4" y2="1319.7" stroke="#e8e8e8" stroke-width="1.5"/><line x1="269.8" y1="1407.5" x2="1232.4" y2="1407.5" stroke="#e8e8e8" stroke-width="1.5"/><line x1="269.8" y1="1495.2" x2="1232.4" y2="1495.2" stroke="#e8e8e8" stroke-width="1.5"/><line x1="269.8" y1="1583" x2="1232.4" y2="1583" stroke="#e8e8e8" stroke-width="1.5"/><line x1="269.8" y1="1670.7" x2="1232.4" y2="1670.7" stroke="#e8e8e8" stroke-width="1.5"/><line x1="275.8" y1="1080" x2="275.8" y2="1670.7" stroke="#e8e8e8" stroke-width="1.5"/><line x1="275.8" y1="1670.7" x2="275.8" y2="1676.2" stroke="#e8e8e8" stroke-width="1.5"/><line x1="395.6" y1="1670.7" x2="395.6" y2="1676.2" stroke="#e8e8e8" stroke-width="1.5"/><line x1="515" y1="1670.7" x2="515" y2="1676.2" stroke="#e8e8e8" stroke-width="1.5"/><line x1="634.8" y1="1670.7" x2="634.8" y2="1676.2" stroke="#e8e8e8" stroke-width="1.5"/><line x1="754.1" y1="1670.7" x2="754.1" y2="1676.2" stroke="#e8e8e8" stroke-width="1.5"/><line x1="873.4" y1="1670.7" x2="873.4" y2="1676.2" stroke="#e8e8e8" stroke-width="1.5"/><line x1="993.3" y1="1670.7" x2="993.3" y2="1676.2" stroke="#e8e8e8" stroke-width="1.5"/><line x1="1112.6" y1="1670.7" x2="1112.6" y2="1676.2" stroke="#e8e8e8" stroke-width="1.5"/><line x1="1232" y1="1670.7" x2="1232" y2="1676.2" stroke="#e8e8e8" stroke-width="1.5"/><text x="259.5" y="1151.5" font-size="20" fill="#666666" text-anchor="end">6000</text><text x="259.5" y="1239.2" font-size="20" fill="#666666" text-anchor="end">5000</text><text x="259.5" y="1326.9" font-size="20" fill="#666666" text-anchor="end">4000</text><text x="259.5" y="1414.7" font-size="20" fill="#666666" text-anchor="end">3000</text><text x="259.5" y="1502.4" font-size="20" fill="#666666" text-anchor="end">2000</text><text x="259.5" y="1590.2" font-size="20" fill="#666666" text-anchor="end">1000</text><text x="259.5" y="1677.9" font-size="20" fill="#666666" text-anchor="end">0</text><text x="275.8" y="1701.6" font-size="22" fill="#666666" text-anchor="middle">01:59 PM</text><text x="395.6" y="1701.6" font-size="22" fill="#666666" text-anchor="middle">02:08 PM</text><text x="515.0" y="1701.6" font-size="22" fill="#666666" text-anchor="middle">02:17 PM</text><text x="634.8" y="1701.6" font-size="22" fill="#666666" text-anchor="middle">02:26 PM</text><text x="754.1" y="1701.6" font-size="22" fill="#666666" text-anchor="middle">02:35 PM</text><text x="873.4" y="1701.6" font-size="22" fill="#666666" text-anchor="middle">02:44 PM</text><text x="993.3" y="1701.6" font-size="22" fill="#666666" text-anchor="middle">02:53 PM</text><text x="1112.6" y="1701.6" font-size="22" fill="#666666" text-anchor="middle">03:02 PM</text><text x="1232.0" y="1701.6" font-size="22" fill="#666666" text-anchor="middle">..</text><text x="0" y="0" font-size="21.5" fill="#666666" text-anchor="middle" transform="translate(200,1374.5) rotate(-90)">Response Time (ms)</text><polygon points="277.3,1670.7 277.3,1597.5 288.3,1604.0 302.4,1627.6 315.9,1438.6 329.0,1493.7 355.5,1404.5 369.1,1625.6 382.6,1556.4 408.7,1581.4 421.7,1646.6 435.2,1237.0 448.3,1671.2 461.8,1401.0 475.3,1271.6 501.4,1456.1 514.9,1626.6 528.0,1615.5 541.5,1408.5 554.6,1671.2 581.1,1408.5 594.7,1614.0 634.3,1314.7 647.8,1548.8 660.8,1495.2 674.4,1563.9 700.9,1305.7 714.0,1593.9 727.6,1329.2 754.1,1339.8 767.2,1327.2 793.7,1671.1 807.3,1621.5 820.3,1671.1 833.8,1551.3 860.4,1492.7 873.4,1671.1 887.0,1264.1 900.5,1345.8 913.5,1671.1 940.6,1671.1 953.6,1220.5 966.7,1671.1 979.7,1671.1 993.2,1365.8 1006.3,1671.1 1033.4,1109.2 1045.9,1121.7 1099.5,1629.0 1126.1,1492.7 1139.6,1315.7 1152.7,1671.1 1166.2,1523.7 1179.7,1671.1 1206.3,1616.5 1219.3,1671.1 1232.4,1553.8 1232.4,1670.7" fill="#46c6e0" fill-opacity="0.75"/><line x1="275.8" y1="1490.2" x2="1232.4" y2="1490.2" stroke="#e4732a" stroke-width="2"/><line x1="1441.2" y1="1111.5" x2="1997.8" y2="1111.5" stroke="#e8e8e8" stroke-width="1.5"/><line x1="1441.2" y1="1185.7" x2="1997.8" y2="1185.7" stroke="#e8e8e8" stroke-width="1.5"/><line x1="1441.2" y1="1259.8" x2="1997.8" y2="1259.8" stroke="#e8e8e8" stroke-width="1.5"/><line x1="1441.2" y1="1288" x2="1997.8" y2="1288" stroke="#e8e8e8" stroke-width="1.5"/><line x1="1447.2" y1="1080.4" x2="1447.2" y2="1288" stroke="#e8e8e8" stroke-width="1.5"/><line x1="1451.8" y1="1288" x2="1451.8" y2="1293.5" stroke="#e8e8e8" stroke-width="1.5"/><line x1="1567.2" y1="1288" x2="1567.2" y2="1293.5" stroke="#e8e8e8" stroke-width="1.5"/><line x1="1682" y1="1288" x2="1682" y2="1293.5" stroke="#e8e8e8" stroke-width="1.5"/><line x1="1796.8" y1="1288" x2="1796.8" y2="1293.5" stroke="#e8e8e8" stroke-width="1.5"/><line x1="1911.8" y1="1288" x2="1911.8" y2="1293.5" stroke="#e8e8e8" stroke-width="1.5"/><text x="1429.6" y="1118.7" font-size="20" fill="#666666" text-anchor="end">150000</text><text x="1429.6" y="1192.9" font-size="20" fill="#666666" text-anchor="end">100000</text><text x="1429.6" y="1267.0" font-size="20" fill="#666666" text-anchor="end">50000</text><text x="1451.8" y="1319.2" font-size="22" fill="#666666" text-anchor="middle">01:52 PM</text><text x="1567.2" y="1319.2" font-size="22" fill="#666666" text-anchor="middle">02:10 PM</text><text x="1682.0" y="1319.2" font-size="22" fill="#666666" text-anchor="middle">02:28 PM</text><text x="1796.8" y="1319.2" font-size="22" fill="#666666" text-anchor="middle">02:46 PM</text><text x="1911.8" y="1319.2" font-size="22" fill="#666666" text-anchor="middle">03:04 PM</text><text x="0" y="0" font-size="21.5" fill="#666666" text-anchor="middle" transform="translate(1346,1183.8) rotate(-90)">Packets</text><line x1="1447.2" y1="1213.9" x2="1997.8" y2="1213.9" stroke="#e4732a" stroke-width="2"/><polyline points="1457.6,1262.7 1464.2,1263.5 1470.5,1212.5 1476.6,1258.6 1482.9,1257.8 1489.3,1263.0 1495.9,1241.9 1502.3,1260.7 1508.9,1254.9 1515.2,1257.8 1521.3,1263.5 1527.7,1259.2 1534.0,1209.6 1540.6,1208.7 1547.0,1263.0 1553.0,1223.2 1560.0,1231.8 1566.0,1226.9 1572.4,1206.7 1578.7,1226.0 1585.3,1239.0 1592.0,1244.2 1598.3,1259.2 1604.7,1252.9 1611.3,1263.5 1617.6,1256.3 1623.7,1226.9 1630.0,1247.1 1635.8,1278.8 1642.2,1128.0 1648.8,1087.6 1655.4,1099.1 1661.8,1110.7 1669.0,1119.3 1675.3,1110.7 1681.4,1172.7 1687.7,1166.3 1694.1,1201.5 1700.7,1190.0 1706.5,1141.0 1713.1,1149.0 1720.0,1153.4 1726.7,1169.8 1733.3,1188.5 1739.1,1170.4 1745.4,1172.7 1751.8,1213.1 1758.4,1221.7 1765.0,1218.8 1770.8,1213.6 1777.1,1226.0 1783.8,1247.7 1790.1,1243.3 1796.5,1247.7 1802.5,1224.6 1808.9,1189.4 1815.2,1196.3 1821.9,1253.4 1828.2,1265.6 1834.3,1247.1 1840.6,1228.1 1847.2,1250.6 1853.6,1247.1 1859.9,1259.2 1866.6,1233.3 1872.9,1214.5 1879.5,1230.4 1886.2,1247.1 1892.5,1259.8 1898.9,1248.2 1904.9,1265.0 1911.3,1238.4 1917.9,1243.3 1924.2,1252.0 1930.9,1259.2 1937.2,1252.9 1943.6,1217.4 1950.2,1230.9 1956.6,1212.5 1962.6,1250.0 1969.5,1253.4 1975.6,1251.4 1981.9,1235.6 1988.3,1247.7" fill="none" stroke="#4ccbe3" stroke-width="3.6" stroke-linejoin="round" stroke-linecap="butt"/><line x1="1396.2" y1="1517.9" x2="1997.8" y2="1517.9" stroke="#e8e8e8" stroke-width="1.5"/><line x1="1396.2" y1="1593.7" x2="1997.8" y2="1593.7" stroke="#e8e8e8" stroke-width="1.5"/><line x1="1396.2" y1="1670.2" x2="1997.8" y2="1670.2" stroke="#e8e8e8" stroke-width="1.5"/><line x1="1402.2" y1="1462.5" x2="1402.2" y2="1670.2" stroke="#e8e8e8" stroke-width="1.5"/><line x1="1402.2" y1="1670.2" x2="1402.2" y2="1675.7" stroke="#e8e8e8" stroke-width="1.5"/><line x1="1518" y1="1670.2" x2="1518" y2="1675.7" stroke="#e8e8e8" stroke-width="1.5"/><line x1="1633.8" y1="1670.2" x2="1633.8" y2="1675.7" stroke="#e8e8e8" stroke-width="1.5"/><line x1="1749.7" y1="1670.2" x2="1749.7" y2="1675.7" stroke="#e8e8e8" stroke-width="1.5"/><line x1="1866" y1="1670.2" x2="1866" y2="1675.7" stroke="#e8e8e8" stroke-width="1.5"/><line x1="1982" y1="1670.2" x2="1982" y2="1675.7" stroke="#e8e8e8" stroke-width="1.5"/><text x="1385.5" y="1525.1" font-size="20" fill="#666666" text-anchor="end">10</text><text x="1385.5" y="1600.9" font-size="20" fill="#666666" text-anchor="end">5</text><text x="1385.5" y="1677.4" font-size="20" fill="#666666" text-anchor="end">0</text><text x="1402.2" y="1702.0" font-size="22" fill="#666666" text-anchor="middle">01:59 P..</text><text x="1518.0" y="1702.0" font-size="22" fill="#666666" text-anchor="middle">02:13 PM</text><text x="1633.8" y="1702.0" font-size="22" fill="#666666" text-anchor="middle">02:27 PM</text><text x="1749.7" y="1702.0" font-size="22" fill="#666666" text-anchor="middle">02:41 PM</text><text x="1866.0" y="1702.0" font-size="22" fill="#666666" text-anchor="middle">02:55 PM</text><text x="1982.0" y="1702.0" font-size="22" fill="#666666" text-anchor="middle">03:0..</text><text x="0" y="0" font-size="21.5" fill="#666666" text-anchor="middle" transform="translate(1347,1567) rotate(-90)">Throughput (rpm)</text><polygon points="1402.8,1670.2 1402.8,1626.9 1410.3,1487.0 1418.0,1609.6 1435.4,1609.6 1443.1,1655.7 1460.4,1549.0 1468.5,1579.3 1477.2,1600.9 1485.3,1624.0 1493.6,1579.3 1501.7,1609.0 1510.3,1624.0 1518.4,1502.9 1526.2,1563.4 1542.9,1563.4 1559.4,1624.0 1567.5,1471.1 1575.8,1639.9 1584.5,1624.0 1592.5,1549.0 1601.2,1533.2 1609.3,1579.3 1617.1,1595.2 1625.7,1655.7 1634.4,1517.3 1642.2,1639.9 1650.2,1517.3 1658.9,1563.4 1667.5,1502.3 1683.4,1563.4 1699.8,1548.4 1708.5,1579.3 1725.2,1655.7 1733.3,1595.2 1741.1,1655.7 1749.7,1624.6 1774.8,1624.6 1782.9,1579.3 1791.6,1563.4 1799.4,1639.9 1816.1,1655.7 1824.7,1595.2 1832.5,1655.7 1841.2,1655.7 1849.3,1579.3 1857.9,1655.7 1874.6,1609.6 1915.6,1609.6 1940.1,1655.7 1948.8,1655.7 1956.8,1639.9 1965.2,1655.7 1981.9,1625.5 1990.0,1655.7 1997.8,1626.9 1997.8,1670.2" fill="#46c6e0" fill-opacity="0.75"/><line x1="1402.2" y1="1591.7" x2="1997.8" y2="1591.7" stroke="#e4732a" stroke-width="2"/><line x1="2151.2" y1="1129.8" x2="2764" y2="1129.8" stroke="#e8e8e8" stroke-width="1.5"/><line x1="2151.2" y1="1208.6" x2="2764" y2="1208.6" stroke="#e8e8e8" stroke-width="1.5"/><line x1="2151.2" y1="1288.4" x2="2764" y2="1288.4" stroke="#e8e8e8" stroke-width="1.5"/><line x1="2157.2" y1="1080.3" x2="2157.2" y2="1288.4" stroke="#e8e8e8" stroke-width="1.5"/><line x1="2157.2" y1="1288.4" x2="2157.2" y2="1293.9" stroke="#e8e8e8" stroke-width="1.5"/><line x1="2273.1" y1="1288.4" x2="2273.1" y2="1293.9" stroke="#e8e8e8" stroke-width="1.5"/><line x1="2389.8" y1="1288.4" x2="2389.8" y2="1293.9" stroke="#e8e8e8" stroke-width="1.5"/><line x1="2506" y1="1288.4" x2="2506" y2="1293.9" stroke="#e8e8e8" stroke-width="1.5"/><line x1="2622" y1="1288.4" x2="2622" y2="1293.9" stroke="#e8e8e8" stroke-width="1.5"/><text x="2140.5" y="1137.0" font-size="20" fill="#666666" text-anchor="end">4</text><text x="2140.5" y="1215.8" font-size="20" fill="#666666" text-anchor="end">2</text><text x="2140.5" y="1295.6" font-size="20" fill="#666666" text-anchor="end">0</text><text x="2157.2" y="1319.5" font-size="22" fill="#666666" text-anchor="middle">01:58 ..</text><text x="2273.1" y="1319.5" font-size="22" fill="#666666" text-anchor="middle">02:12 PM</text><text x="2389.8" y="1319.5" font-size="22" fill="#666666" text-anchor="middle">02:26 PM</text><text x="2506.0" y="1319.5" font-size="22" fill="#666666" text-anchor="middle">02:40 PM</text><text x="2622.0" y="1319.5" font-size="22" fill="#666666" text-anchor="middle">02:54 PM</text><text x="0" y="0" font-size="21.5" fill="#666666" text-anchor="middle" transform="translate(2111,1184) rotate(-90)">Count</text><polygon points="2158.0,1288.4 2158.0,1254.5 2165.4,1288.4 2173.4,1129.8 2181.1,1248.4 2189.6,1288.4 2199.1,1288.4 2206.8,1249.2 2214.7,1288.4 2223.5,1091.4 2231.5,1248.4 2247.9,1288.4 2256.7,1210.2 2265.1,1248.4 2281.6,1130.6 2298.3,1288.4 2307.0,1209.4 2315.0,1209.4 2323.0,1288.4 2331.7,1129.8 2339.7,1248.4 2348.4,1288.4 2364.9,1130.6 2380.8,1288.4 2389.8,1288.4 2398.5,1090.1 2414.5,1248.4 2423.2,1288.4 2431.2,1209.4 2439.7,1248.4 2447.6,1209.4 2464.3,1209.4 2472.8,1288.4 2489.5,1288.4 2498.0,1209.4 2506.0,1288.4 2515.2,1288.4 2531.2,1248.4 2547.9,1248.4 2555.8,1209.4 2563.8,1288.4 2581.5,1288.4 2589.5,1249.2 2598.8,1288.4 2598.8,1288.4" fill="#46c6e0" fill-opacity="0.75"/><line x1="2162.3" y1="1492.5" x2="2764" y2="1492.5" stroke="#e8e8e8" stroke-width="1.5"/><line x1="2162.3" y1="1632.3" x2="2764" y2="1632.3" stroke="#e8e8e8" stroke-width="1.5"/><line x1="2168.3" y1="1462.2" x2="2168.3" y2="1632.3" stroke="#e8e8e8" stroke-width="1.5"/><line x1="2179.9" y1="1632.3" x2="2179.9" y2="1637.8" stroke="#e8e8e8" stroke-width="1.5"/><line x1="2293.6" y1="1632.3" x2="2293.6" y2="1637.8" stroke="#e8e8e8" stroke-width="1.5"/><line x1="2408.4" y1="1632.3" x2="2408.4" y2="1637.8" stroke="#e8e8e8" stroke-width="1.5"/><line x1="2522.7" y1="1632.3" x2="2522.7" y2="1637.8" stroke="#e8e8e8" stroke-width="1.5"/><line x1="2637" y1="1632.3" x2="2637" y2="1637.8" stroke="#e8e8e8" stroke-width="1.5"/><text x="2151.1" y="1499.7" font-size="20" fill="#666666" text-anchor="end">50</text><text x="2151.1" y="1639.5" font-size="20" fill="#666666" text-anchor="end">0</text><text x="2179.9" y="1663.3" font-size="22" fill="#666666" text-anchor="middle">02:11 PM</text><text x="2293.6" y="1663.3" font-size="22" fill="#666666" text-anchor="middle">02:23 PM</text><text x="2408.4" y="1663.3" font-size="22" fill="#666666" text-anchor="middle">02:35 PM</text><text x="2522.7" y="1663.3" font-size="22" fill="#666666" text-anchor="middle">02:47 PM</text><text x="2637.0" y="1663.3" font-size="22" fill="#666666" text-anchor="middle">02:59 PM</text><text x="0" y="0" font-size="21.5" fill="#666666" text-anchor="middle" transform="translate(2112,1547.5) rotate(-90)">Response Time (..</text><polyline points="2179.9,1631.5 2198.7,1631.5 2208.1,1609.5 2217.5,1631.5 2303.6,1631.5 2313.5,1619.4 2322.9,1630.2 2332.3,1619.4 2341.7,1631.5 2360.6,1631.5 2370.0,1620.3 2388.8,1631.5 2427.2,1631.5 2446.6,1620.8 2456.0,1631.5 2465.7,1626.2 2475.6,1631.5 2485.0,1631.5 2503.9,1618.6 2513.3,1631.5 2596.6,1631.5" fill="none" stroke="#40b8c8" stroke-width="3.6" stroke-linejoin="round" stroke-linecap="butt"/><line x1="2168.3" y1="1628.3" x2="2764" y2="1628.3" stroke="#e4732a" stroke-width="2"/><polyline points="2179.9,1623.5 2189.3,1577.2 2198.7,1620.8 2208.1,1598.7 2217.5,1606.8 2227.5,1626.2 2255.2,1624.0 2265.1,1589.9 2284.7,1627.5 2294.1,1538.0 2303.6,1602.0 2313.5,1626.2 2322.9,1574.5 2332.3,1624.8 2341.7,1615.4 2351.1,1612.7 2360.6,1627.5 2370.0,1618.6 2399.0,1626.2 2408.4,1626.2 2418.4,1624.8 2427.8,1470.8 2437.2,1552.2 2446.6,1626.2 2456.0,1627.5 2465.7,1618.6 2475.6,1627.5 2485.0,1569.2 2503.9,1627.5 2513.3,1624.0 2596.6,1624.0" fill="none" stroke="#2a9577" stroke-width="3.6" stroke-linejoin="round" stroke-linecap="butt"/><clipPath id="cd"><rect x="2071" y="1690" width="760" height="31"/></clipPath><g clip-path="url(#cd)"><rect x="2103.8" y="1701.4" width="20" height="20" fill="#40b5c9"/><text x="2134.7" y="1718.9" font-size="20" fill="#555" text-anchor="start">select</text><rect x="2190.1" y="1701.4" width="20" height="20" fill="#2d9a7a"/><text x="2220.8" y="1718.9" font-size="20" fill="#555" text-anchor="start">insert</text></g></svg>
<div style="position:absolute;left:2596px;top:387.6px;width:667px;height:1372.9px;border-radius:80px;background:#b0b0b0;"></div>
<div style="position:absolute;left:2597.7px;top:388.96000000000004px;width:663.6000000000004px;height:1370.2649999999999px;border-radius:78.3px;background:#e6e8e8;"></div>
<div style="position:absolute;left:2599.9px;top:390.72px;width:659.1999999999998px;height:1366.855px;border-radius:76.1px;background:#050505;"></div>
<div style="position:absolute;left:2601.1px;top:391.68px;width:656.8000000000002px;height:1364.995px;border-radius:74.9px;background:#37393b;"></div>
<div style="position:absolute;left:2606px;top:395.6px;width:647px;height:1357.4px;border-radius:70px;background:#1c2127;"></div>
<div style="position:absolute;left:2607.4px;top:396.72px;width:644.1999999999998px;height:1355.23px;border-radius:68.6px;background:#2a2c2e;"></div>
<div style="position:absolute;left:2608.8px;top:397.84000000000003px;width:641.3999999999996px;height:1353.06px;border-radius:67.2px;background:#434544;"></div>
<div style="position:absolute;left:2615px;top:402.8px;width:629px;height:1343.45px;border-radius:61px;background:#000;"></div>
<div style="position:absolute;left:3262px;top:707px;width:4.5px;height:85px;background:#a9d6cf;border:1px solid #8a9a98;border-left:none;box-sizing:border-box;border-radius:0 2px 2px 0;"></div>
<div style="position:absolute;left:3262px;top:880.5px;width:4.5px;height:171.5px;background:#e4e4e4;border:1px solid #9a9a9a;border-left:none;box-sizing:border-box;border-radius:0 2px 2px 0;"></div>
<div style="position:absolute;top:443.37px;font-size:20px;line-height:20px;color:#fff;white-space:nowrap;font-weight:bold;left:2645.50px;">4:18</div>
<svg style="position:absolute;left:2698px;top:436px" width="130" height="32"><circle cx="15.5" cy="15.5" r="9" fill="none" stroke="#fff" stroke-width="2.3"/><path d="M5 27 L7.2 19.5 L12.5 24 Z" fill="#fff"/><path d="M11.5 11.5 q0.5 -1.5 2 -1 l1.2 2.5 q-0.3 1 -1 1.4 q1 2.8 4 4.2 q0.6 -0.8 1.4 -1 l2.4 1.2 q0.3 1.5 -1.2 2.2 q-3.5 0.5 -6.8 -3.2 q-2.6 -3 -2 -6.3z" fill="#fff"/></svg>
<div style="position:absolute;top:438.99px;font-size:26px;line-height:26px;color:#fff;white-space:nowrap;font-weight:bold;left:2736.00px;font-family:'Liberation Serif',serif;">Q</div>
<div style="position:absolute;left:2775.6px;top:448px;width:6.0px;height:6px;background:#fff;border-radius:50%;"></div>
<svg style="position:absolute;left:2820px;top:400px" width="220" height="90"><path d="M12 25 C22 30 24 40 24 55 C24 75 40 82 60 82 L155 82 C180 82 195 75 195 55 C195 40 198 30 208 25" fill="none" stroke="#0a0a0a" stroke-width="1"/><circle cx="46" cy="51" r="17" fill="#1f2225"/><circle cx="46" cy="51" r="11" fill="#0c0d0f"/><circle cx="46" cy="51" r="3" fill="#2b2f33"/><circle cx="173.6" cy="51" r="17" fill="#1f2225"/><circle cx="173.6" cy="51" r="11" fill="#0c0d0f"/><circle cx="173.6" cy="51" r="3" fill="#2b2f33"/><circle cx="89.6" cy="41" r="8" fill="#141618"/><rect x="74" y="57.5" width="71" height="11.5" rx="5.75" fill="#1b2530"/></svg>
<svg style="position:absolute;left:3108px;top:438px" width="110" height="28"><rect x="9.5" y="5" width="9.5" height="18" rx="1.5" fill="none" stroke="#fff" stroke-width="2.4"/><path d="M5.5 9 V19 M1.5 11.5 V16.5 M23 9 V19 M27 11.5 V16.5" stroke="#fff" stroke-width="2"/><path d="M38.6 9 Q50 0 61 9 L49.8 23.5 Z" fill="#fff"/><path d="M65 23.5 L83 5 V23.5 Z" fill="#fff"/><rect x="93.7" y="8" width="11.3" height="15.5" fill="#fff"/><rect x="93.7" y="5" width="11.3" height="3" fill="#8a8a8a"/><rect x="96.5" y="3.5" width="5.5" height="2" fill="#8a8a8a"/></svg>
<div style="position:absolute;left:2625px;top:488px;width:610px;height:157px;background:#1b2530;"></div>
<div style="position:absolute;left:2652px;top:520px;width:28.5px;height:3.5px;background:#fff;"></div>
<div style="position:absolute;left:2652px;top:528.1px;width:28.5px;height:3.5px;background:#fff;"></div>
<div style="position:absolute;left:2652px;top:536.3px;width:28.5px;height:3.5px;background:#fff;"></div>
<div style="position:absolute;top:515.88px;font-size:30.5px;line-height:30.5px;color:#fff;white-space:nowrap;left:2732.00px;-webkit-text-stroke:0.4px #fff;">Monitors</div>
<svg style="position:absolute;left:3112px;top:510px" width="110" height="42"><circle cx="15.5" cy="17" r="9" fill="none" stroke="#fff" stroke-width="3"/><path d="M22 23.5 L31.5 33" stroke="#fff" stroke-width="3.4"/><path d="M78 33 V22 C78 15 81 11 86 10 V6 C86 3.5 89 3.5 89 6 V10 C94 11 97 15 97 22 V33 L102.5 36.5 V38 H74 V36.5 Z" fill="#fff"/><path d="M83.5 40 H92 C92 42.5 90 44 87.7 44 C85.5 44 83.5 42.5 83.5 40Z" fill="#fff"/></svg>
<div style="position:absolute;left:2625px;top:580px;width:610px;height:65px;overflow:hidden;"><div style="position:absolute;top:18.62px;font-size:21px;line-height:21px;color:#9ea3a8;white-space:nowrap;transform:scaleX(0.9397);transform-origin:0 0;left:88.00px;-webkit-text-stroke:0.45px #9ea3a8;">CRITICAL</div>
<div style="position:absolute;top:18.62px;font-size:21px;line-height:21px;color:#9ea3a8;white-space:nowrap;transform:scaleX(0.9213);transform-origin:0 0;left:213.00px;-webkit-text-stroke:0.45px #9ea3a8;">TROUBLE</div>
<div style="position:absolute;top:18.62px;font-size:21px;line-height:21px;color:#9ea3a8;white-space:nowrap;transform:scaleX(0.9614);transform-origin:0 0;left:339.50px;-webkit-text-stroke:0.45px #9ea3a8;">MAINTENANCE</div>
<div style="position:absolute;top:18.62px;font-size:21px;line-height:21px;color:#ffffff;white-space:nowrap;transform:scaleX(0.9397);transform-origin:0 0;left:543.00px;-webkit-text-stroke:0.45px #ffffff;">UP</div>
<div style="position:absolute;top:18.62px;font-size:21px;line-height:21px;color:#9ea3a8;white-space:nowrap;transform:scaleX(0.9181);transform-origin:0 0;left:-15.04px;-webkit-text-stroke:0.45px #9ea3a8;">DOWN</div>
<div style="position:absolute;left:502.5px;top:62px;width:107.5px;height:3px;background:#3ba3dd;"></div>
</div>
<div style="position:absolute;left:2625px;top:645px;width:610px;height:953.5px;overflow:hidden;background:#fff;"><div style="position:absolute;left:27.7px;top:46.0px;width:36.8px;height:37.0px;background:#35c46f;border-radius:50%;"></div>
<svg style="position:absolute;left:27.7px;top:46.0px" width="37" height="37"><path d="M18.5 27 V11 M12 17 L18.5 10.5 L25 17" fill="none" stroke="#fff" stroke-width="2.2"/></svg><div style="position:absolute;top:18.31px;font-size:21.6px;line-height:21.6px;color:#2d3e4e;white-space:nowrap;left:83.00px;-webkit-text-stroke:0.3px #2d3e4e;">0001</div>
<div style="position:absolute;top:50.49px;font-size:19.5px;line-height:19.5px;color:#5f6368;white-space:nowrap;left:83.00px;">Last Polled</div>
<div style="position:absolute;top:50.49px;font-size:19.5px;line-height:19.5px;color:#5f6368;white-space:nowrap;left:192.50px;">4 mins ago</div>
<div style="position:absolute;top:85.66px;font-size:19.3px;line-height:19.3px;color:#5f6368;white-space:nowrap;left:83.00px;">EC Memcached Node - 0.83 %</div>
<div style="position:absolute;left:564.5px;top:52.5px;width:7.0px;height:7.0px;background:#666;border-radius:50%;"></div>
<div style="position:absolute;left:564.5px;top:61.0px;width:7.0px;height:7.0px;background:#666;border-radius:50%;"></div>
<div style="position:absolute;left:564.5px;top:69.5px;width:7.0px;height:7.0px;background:#666;border-radius:50%;"></div>
<div style="position:absolute;left:0px;top:128.5px;width:610px;height:1.5px;background:#dedede;"></div>
<div style="position:absolute;left:27.7px;top:175.33px;width:36.8px;height:37.0px;background:#35c46f;border-radius:50%;"></div>
<svg style="position:absolute;left:27.7px;top:175.3px" width="37" height="37"><path d="M18.5 27 V11 M12 17 L18.5 10.5 L25 17" fill="none" stroke="#fff" stroke-width="2.2"/></svg><div style="position:absolute;top:147.64px;font-size:21.6px;line-height:21.6px;color:#2d3e4e;white-space:nowrap;left:83.00px;-webkit-text-stroke:0.3px #2d3e4e;">1 NEW-RBM-CART</div>
<div style="position:absolute;top:179.82px;font-size:19.5px;line-height:19.5px;color:#5f6368;white-space:nowrap;left:83.00px;">Last Polled</div>
<div style="position:absolute;top:179.82px;font-size:19.5px;line-height:19.5px;color:#5f6368;white-space:nowrap;left:192.50px;">59 secs ago</div>
<div style="position:absolute;top:214.99px;font-size:19.3px;line-height:19.3px;color:#5f6368;white-space:nowrap;left:83.00px;">Web Transaction (Browser) - 14641 ms</div>
<div style="position:absolute;left:564.5px;top:181.83px;width:7.0px;height:7.0px;background:#666;border-radius:50%;"></div>
<div style="position:absolute;left:564.5px;top:190.33px;width:7.0px;height:7.0px;background:#666;border-radius:50%;"></div>
<div style="position:absolute;left:564.5px;top:198.83px;width:7.0px;height:7.0px;background:#666;border-radius:50%;"></div>
<div style="position:absolute;left:0px;top:257.83000000000004px;width:610px;height:1.5px;background:#dedede;"></div>
<div style="position:absolute;left:27.7px;top:304.66px;width:36.8px;height:37.0px;background:#35c46f;border-radius:50%;"></div>
<svg style="position:absolute;left:27.7px;top:304.7px" width="37" height="37"><path d="M18.5 27 V11 M12 17 L18.5 10.5 L25 17" fill="none" stroke="#fff" stroke-width="2.2"/></svg><div style="position:absolute;top:276.97px;font-size:21.6px;line-height:21.6px;color:#2d3e4e;white-space:nowrap;left:83.00px;-webkit-text-stroke:0.3px #2d3e4e;">10.10.10.6</div>
<div style="position:absolute;top:309.15px;font-size:19.5px;line-height:19.5px;color:#5f6368;white-space:nowrap;left:83.00px;">Last Polled</div>
<div style="position:absolute;top:309.15px;font-size:19.5px;line-height:19.5px;color:#5f6368;white-space:nowrap;left:192.50px;">2 mins ago</div>
<div style="position:absolute;top:344.32px;font-size:19.3px;line-height:19.3px;color:#5f6368;white-space:nowrap;left:83.00px;">Network Device - 1 ms</div>
<div style="position:absolute;left:564.5px;top:311.16px;width:7.0px;height:7.0px;background:#666;border-radius:50%;"></div>
<div style="position:absolute;left:564.5px;top:319.66px;width:7.0px;height:7.0px;background:#666;border-radius:50%;"></div>
<div style="position:absolute;left:564.5px;top:328.16px;width:7.0px;height:7.0px;background:#666;border-radius:50%;"></div>
<div style="position:absolute;left:0px;top:387.16px;width:610px;height:1.5px;background:#dedede;"></div>
<div style="position:absolute;left:27.7px;top:433.99px;width:36.8px;height:37.0px;background:#35c46f;border-radius:50%;"></div>
<svg style="position:absolute;left:27.7px;top:434.0px" width="37" height="37"><path d="M18.5 27 V11 M12 17 L18.5 10.5 L25 17" fill="none" stroke="#fff" stroke-width="2.2"/></svg><div style="position:absolute;top:406.30px;font-size:21.6px;line-height:21.6px;color:#2d3e4e;white-space:nowrap;left:83.00px;-webkit-text-stroke:0.3px #2d3e4e;">192.168.50.221</div>
<div style="position:absolute;top:438.48px;font-size:19.5px;line-height:19.5px;color:#5f6368;white-space:nowrap;left:83.00px;">Last Polled</div>
<div style="position:absolute;top:438.48px;font-size:19.5px;line-height:19.5px;color:#5f6368;white-space:nowrap;left:192.50px;">3 mins ago</div>
<div style="position:absolute;top:473.65px;font-size:19.3px;line-height:19.3px;color:#5f6368;white-space:nowrap;left:83.00px;">VMware ESX/ESXi Server - 9 %</div>
<div style="position:absolute;left:564.5px;top:440.49px;width:7.0px;height:7.0px;background:#666;border-radius:50%;"></div>
<div style="position:absolute;left:564.5px;top:448.99px;width:7.0px;height:7.0px;background:#666;border-radius:50%;"></div>
<div style="position:absolute;left:564.5px;top:457.49px;width:7.0px;height:7.0px;background:#666;border-radius:50%;"></div>
<div style="position:absolute;left:0px;top:516.49px;width:610px;height:1.5px;background:#dedede;"></div>
<div style="position:absolute;left:27.7px;top:563.32px;width:36.8px;height:37.0px;background:#35c46f;border-radius:50%;"></div>
<svg style="position:absolute;left:27.7px;top:563.3px" width="37" height="37"><path d="M18.5 27 V11 M12 17 L18.5 10.5 L25 17" fill="none" stroke="#fff" stroke-width="2.2"/></svg><div style="position:absolute;top:535.63px;font-size:21.6px;line-height:21.6px;color:#2d3e4e;white-space:nowrap;left:83.00px;-webkit-text-stroke:0.3px #2d3e4e;">192.168.50.222</div>
<div style="position:absolute;top:567.81px;font-size:19.5px;line-height:19.5px;color:#5f6368;white-space:nowrap;left:83.00px;">Last Polled</div>
<div style="position:absolute;top:567.81px;font-size:19.5px;line-height:19.5px;color:#5f6368;white-space:nowrap;left:192.50px;">2 months ago</div>
<div style="position:absolute;top:602.98px;font-size:19.3px;line-height:19.3px;color:#5f6368;white-space:nowrap;left:83.00px;">VMware ESX/ESXi Server - - - -</div>
<div style="position:absolute;left:564.5px;top:569.82px;width:7.0px;height:7.0px;background:#666;border-radius:50%;"></div>
<div style="position:absolute;left:564.5px;top:578.32px;width:7.0px;height:7.0px;background:#666;border-radius:50%;"></div>
<div style="position:absolute;left:564.5px;top:586.82px;width:7.0px;height:7.0px;background:#666;border-radius:50%;"></div>
<div style="position:absolute;left:0px;top:645.82px;width:610px;height:1.5px;background:#dedede;"></div>
<div style="position:absolute;left:27.7px;top:692.6500000000001px;width:36.8px;height:37.0px;background:#35c46f;border-radius:50%;"></div>
<svg style="position:absolute;left:27.7px;top:692.7px" width="37" height="37"><path d="M18.5 27 V11 M12 17 L18.5 10.5 L25 17" fill="none" stroke="#fff" stroke-width="2.2"/></svg><div style="position:absolute;top:664.96px;font-size:21.6px;line-height:21.6px;color:#2d3e4e;white-space:nowrap;left:83.00px;-webkit-text-stroke:0.3px #2d3e4e;">221_test</div>
<div style="position:absolute;top:697.14px;font-size:19.5px;line-height:19.5px;color:#5f6368;white-space:nowrap;left:83.00px;">Last Polled</div>
<div style="position:absolute;top:697.14px;font-size:19.5px;line-height:19.5px;color:#5f6368;white-space:nowrap;left:192.50px;">6 mins ago</div>
<div style="position:absolute;top:732.31px;font-size:19.3px;line-height:19.3px;color:#5f6368;white-space:nowrap;left:83.00px;">Datastore - 0.47 GB</div>
<div style="position:absolute;left:564.5px;top:699.1500000000001px;width:7.0px;height:7.0px;background:#666;border-radius:50%;"></div>
<div style="position:absolute;left:564.5px;top:707.6500000000001px;width:7.0px;height:7.0px;background:#666;border-radius:50%;"></div>
<div style="position:absolute;left:564.5px;top:716.1500000000001px;width:7.0px;height:7.0px;background:#666;border-radius:50%;"></div>
<div style="position:absolute;left:0px;top:775.1500000000001px;width:610px;height:1.5px;background:#dedede;"></div>
<div style="position:absolute;left:27.7px;top:821.98px;width:36.8px;height:37.0px;background:#35c46f;border-radius:50%;"></div>
<svg style="position:absolute;left:27.7px;top:822.0px" width="37" height="37"><path d="M18.5 27 V11 M12 17 L18.5 10.5 L25 17" fill="none" stroke="#fff" stroke-width="2.2"/></svg><div style="position:absolute;top:794.29px;font-size:21.6px;line-height:21.6px;color:#2d3e4e;white-space:nowrap;left:83.00px;-webkit-text-stroke:0.3px #2d3e4e;">221_test_one_vm</div>
<div style="position:absolute;top:826.47px;font-size:19.5px;line-height:19.5px;color:#5f6368;white-space:nowrap;left:83.00px;">Last Polled</div>
<div style="position:absolute;top:826.47px;font-size:19.5px;line-height:19.5px;color:#5f6368;white-space:nowrap;left:192.50px;">1 year ago</div>
<div style="position:absolute;top:861.64px;font-size:19.3px;line-height:19.3px;color:#5f6368;white-space:nowrap;left:83.00px;">VMware VM - 0 %</div>
<div style="position:absolute;left:564.5px;top:828.48px;width:7.0px;height:7.0px;background:#666;border-radius:50%;"></div>
<div style="position:absolute;left:564.5px;top:836.98px;width:7.0px;height:7.0px;background:#666;border-radius:50%;"></div>
<div style="position:absolute;left:564.5px;top:845.48px;width:7.0px;height:7.0px;background:#666;border-radius:50%;"></div>
<div style="position:absolute;left:0px;top:904.48px;width:610px;height:1.5px;background:#dedede;"></div>
<div style="position:absolute;left:27.7px;top:951.3100000000001px;width:36.8px;height:37.0px;background:#35c46f;border-radius:50%;"></div>
<svg style="position:absolute;left:27.7px;top:951.3px" width="37" height="37"><path d="M18.5 27 V11 M12 17 L18.5 10.5 L25 17" fill="none" stroke="#fff" stroke-width="2.2"/></svg><div style="position:absolute;top:923.62px;font-size:21.6px;line-height:21.6px;color:#2d3e4e;white-space:nowrap;left:83.00px;-webkit-text-stroke:0.3px #2d3e4e;">9hu772w99g.execute-api.us-east-1....</div>
<div style="position:absolute;left:0px;top:1033.81px;width:610px;height:1.5px;background:#dedede;"></div>
</div>
<div style="position:absolute;left:3128.8px;top:1491.8px;width:82.39999999999964px;height:82.40000000000009px;background:#3caee8;border-radius:50%;box-shadow:0 4px 10px rgba(0,0,0,0.25);"></div>
<div style="position:absolute;left:3158px;top:1531.5px;width:24px;height:3.0px;background:#fff;"></div>
<div style="position:absolute;left:3168.5px;top:1521px;width:3.0px;height:24px;background:#fff;"></div>
<svg style="position:absolute;left:2740px;top:1620px" width="280" height="110"><path d="M22 7.5 L13 15 L22 22.5" fill="none" stroke="#fff" stroke-width="2.6"/><rect x="168.5" y="7" width="42" height="15" rx="7.5" fill="#fff"/><rect x="113" y="91.7" width="153.5" height="12.3" rx="6" fill="#1b2530"/></svg>
</body></html>
